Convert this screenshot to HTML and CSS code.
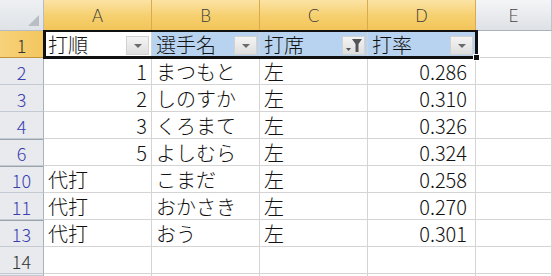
FILE: index.html
```html
<!DOCTYPE html>
<html lang="ja">
<head>
<meta charset="utf-8">
<link rel="stylesheet" href="styles.css">
</head>
<body>
<div class="sheet">
  <div class="corner"><span class="tri"></span></div>
  <div class="colhead sel">A</div>
  <div class="colhead sel">B</div>
  <div class="colhead sel">C</div>
  <div class="colhead sel">D</div>
  <div class="colhead">E</div>

  <div class="rowhead sel">1</div>
  <div class="cell hdr active">打順<span class="btn"><span class="arrow"></span></span></div>
  <div class="cell hdr hl">選手名<span class="btn"><span class="arrow"></span></span></div>
  <div class="cell hdr hl">打席<span class="btn"><svg class="funnel" width="18" height="16" viewBox="0 0 18 16"><path d="M7 1h10l-3.5 5v8h-3V6z" fill="#555"/><path d="M1 10h5l-2.5 3z" fill="#555"/></svg></span></div>
  <div class="cell hdr hl">打率<span class="btn"><span class="arrow"></span></span></div>
  <div class="cell"></div>

  <div class="rowhead flt">2</div>
  <div class="cell num">1</div><div class="cell">まつもと</div><div class="cell">左</div><div class="cell num d">0.286</div><div class="cell"></div>

  <div class="rowhead flt">3</div>
  <div class="cell num">2</div><div class="cell">しのすか</div><div class="cell">左</div><div class="cell num d">0.310</div><div class="cell"></div>

  <div class="rowhead flt">4</div>
  <div class="cell num">3</div><div class="cell">くろまて</div><div class="cell">左</div><div class="cell num d">0.326</div><div class="cell"></div>

  <div class="rowhead flt gap">6</div>
  <div class="cell num">5</div><div class="cell">よしむら</div><div class="cell">左</div><div class="cell num d">0.324</div><div class="cell"></div>

  <div class="rowhead flt gap">10</div>
  <div class="cell">代打</div><div class="cell">こまだ</div><div class="cell">左</div><div class="cell num d">0.258</div><div class="cell"></div>

  <div class="rowhead flt">11</div>
  <div class="cell">代打</div><div class="cell">おかさき</div><div class="cell">左</div><div class="cell num d">0.270</div><div class="cell"></div>

  <div class="rowhead flt gap">13</div>
  <div class="cell">代打</div><div class="cell">おう</div><div class="cell">左</div><div class="cell num d">0.301</div><div class="cell"></div>

  <div class="rowhead">14</div>
  <div class="cell"></div><div class="cell"></div><div class="cell"></div><div class="cell"></div><div class="cell"></div>

  <div class="rowhead"></div>
  <div class="cell"></div><div class="cell"></div><div class="cell"></div><div class="cell"></div><div class="cell"></div>

  <div class="selbox"><span class="handle"></span></div>
</div>
</body>
</html>
```

FILE: styles.css
```css
* { box-sizing: border-box; }
html, body { margin: 0; padding: 0; background: #fff; }
body { width: 552px; height: 276px; overflow: hidden; }

.sheet {
  display: grid;
  grid-template-columns: 44px 108px 108px 108px 108px 1fr;
  grid-template-rows: 31px repeat(9, 27px) 2px;
  height: 276px;
  overflow: hidden;
  font-family: "Noto Sans CJK JP", "DejaVu Sans", sans-serif;
  position: relative;
}

.corner {
  background: linear-gradient(#eef0f3, #dfe2e6);
  border-right: 1px solid #b5bcc6;
  border-bottom: 1px solid #b5bcc6;
  position: relative;
}
.corner .tri {
  position: absolute;
  right: 4px; bottom: 4px;
  width: 0; height: 0;
  border-left: 11px solid transparent;
  border-bottom: 11px solid #b9bec5;
}

.colhead {
  display: flex; align-items: center; justify-content: center;
  font-family: "DejaVu Sans", sans-serif;
  font-weight: 200;
  font-size: 17px;
  color: #444;
  background: linear-gradient(#f4f5f7, #dee1e5);
  border-right: 1px solid #bcc3cc;
  border-bottom: 1px solid #a9b1bb;
  padding-top: 2px;
}
.colhead.sel {
  background: linear-gradient(#fbe3a5, #f6cf6d 55%, #f2c55a);
  border-right: 1px solid #d8ab4c;
  border-bottom: 1px solid #c2953b;
  color: #3a3a3a;
}

.rowhead {
  display: flex; align-items: center; justify-content: center;
  font-family: "Noto Sans CJK JP", sans-serif;
  font-weight: 300;
  font-size: 18px;
  color: #333;
  background: #e8eaee;
  border-right: 1px solid #a9b1bb;
  border-bottom: 1px solid #c4cad2;
  padding-top: 1px;
  overflow: hidden;
}
.rowhead.flt { color: #3a3fb0; }
.rowhead.gap { border-top: 1px solid #9ba3ad; }
.rowhead.sel {
  background: linear-gradient(90deg, #f7d27a, #f3c65f);
  color: #333;
  border-bottom: 1px solid #c2953b;
  border-right: 1px solid #c2953b;
}

.cell {
  display: flex; align-items: center;
  position: relative;
  font-size: 20px;
  font-weight: 300;
  line-height: 1;
  color: #111;
  padding: 2px 0 0 4px;
  border-right: 1px solid #d4d4d4;
  border-bottom: 1px solid #d4d4d4;
  white-space: nowrap;
  overflow: hidden;
}
.cell.num { justify-content: flex-end; padding-right: 4px; padding-left: 0; }
.cell.num.d { padding-right: 8px; }

.cell.hdr { padding-left: 4px; }
.cell.hl { background: #b8d3ef; }
.cell.active { background: #fff; }

.btn {
  position: absolute;
  right: 2px; top: 5px;
  width: 23px; height: 19px;
  background: linear-gradient(#f4f4f4, #dedede);
  border: 1px solid #d2d2d2;
  display: flex; align-items: center; justify-content: center;
}
.btn .arrow {
  width: 0; height: 0;
  border-left: 4px solid transparent;
  border-right: 4px solid transparent;
  border-top: 4px solid #6a6a6a;
}
.btn .funnel { display: block; }

.selbox {
  position: absolute;
  left: 43px; top: 30px;
  width: 435px; height: 29px;
  border: 3px solid #111;
  border-top-width: 2px;
  pointer-events: none;
}
.handle {
  position: absolute;
  right: -5px; bottom: -5px;
  width: 7px; height: 7px;
  background: #111;
  border: 1px solid #fff;
}
```
